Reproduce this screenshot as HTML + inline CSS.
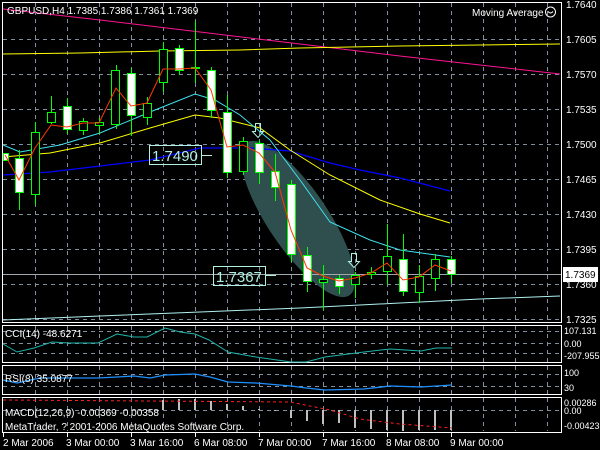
<!DOCTYPE html>
<html><head><meta charset="utf-8"><style>
html,body{margin:0;padding:0;background:#000;width:600px;height:450px;overflow:hidden}
svg{display:block}
text{font-family:"Liberation Sans",sans-serif;font-size:10px;fill:#fff}
</style></head><body>
<svg width="600" height="450" viewBox="0 0 600 450" xmlns="http://www.w3.org/2000/svg">
<rect width="600" height="450" fill="#000"/>
<g stroke="#7f8f9f" stroke-width="1" stroke-dasharray="4,4">
<path d="M3 39.5H561M3 74.5H561M3 109.5H561M3 144.5H561M3 179.5H561M3 214.5H561M3 249.5H561M3 284.5H561M3 319.5H561"/>
<path d="M35.5 3V322M67.5 3V322M99.5 3V322M131.5 3V322M163.5 3V322M195.5 3V322M227.5 3V322M259.5 3V322M291.5 3V322M323.5 3V322M355.5 3V322M387.5 3V322M419.5 3V322M451.5 3V322M483.5 3V322M515.5 3V322M547.5 3V322"/>
<path d="M3 331.5H561M3 343.5H561M3 353.5H561M3 374.5H561M3 386.5H561M3 410.5H561"/>
<path d="M35.5 326V362M67.5 326V362M99.5 326V362M131.5 326V362M163.5 326V362M195.5 326V362M227.5 326V362M259.5 326V362M291.5 326V362M323.5 326V362M355.5 326V362M387.5 326V362M419.5 326V362M451.5 326V362M483.5 326V362M515.5 326V362M547.5 326V362"/>
<path d="M35.5 366V394M67.5 366V394M99.5 366V394M131.5 366V394M163.5 366V394M195.5 366V394M227.5 366V394M259.5 366V394M291.5 366V394M323.5 366V394M355.5 366V394M387.5 366V394M419.5 366V394M451.5 366V394M483.5 366V394M515.5 366V394M547.5 366V394"/>
<path d="M35.5 398V431M67.5 398V431M99.5 398V431M131.5 398V431M163.5 398V431M195.5 398V431M227.5 398V431M259.5 398V431M291.5 398V431M323.5 398V431M355.5 398V431M387.5 398V431M419.5 398V431M451.5 398V431M483.5 398V431M515.5 398V431M547.5 398V431"/>
</g>
<g fill="none" stroke="#fff" stroke-width="1">
<rect x="2.5" y="2.5" width="559" height="320"/>
<rect x="2.5" y="325.5" width="559" height="37"/>
<rect x="2.5" y="365.5" width="559" height="29"/>
<rect x="2.5" y="397.5" width="559" height="35"/>
</g>
<ellipse cx="298" cy="219" rx="92" ry="30" transform="rotate(56 298 219)" fill="#2f4f4f"/>
<polyline fill="none" stroke="#ff1493" points="3,9 100,20 200,32 300,44 400,56 480,65 560,74"/>
<polyline fill="none" stroke="#ffff00" points="3,54 80,53 160,51 240,50 300,48 400,46 480,45 560,44"/>
<polyline fill="none" stroke="#b0f0f0" points="3,320 100,316 200,312 300,308 400,303 480,299 560,296"/>
<polyline fill="none" stroke="#0000ff" stroke-width="1.3" points="3,175 50,172 100,166 150,160 200,148 250,148 290,151 330,163 360,170 400,178 450,191"/>
<polyline fill="none" stroke="#ffff00" points="3,157 50,153 100,143 150,128 195,115 220,118 260,128 290,150 330,175 380,200 420,214 450,223"/>
<polyline fill="none" stroke="#40e0f0" points="3,145 20,152 60,145 100,133 150,112 195,94 215,100 240,115 270,140 300,180 330,222 370,240 400,250 450,257"/>
<line x1="3" y1="274.5" x2="561" y2="274.5" stroke="#a0a8b0"/>
<g stroke="#00ff00" stroke-width="1">
<path d="M19.5 150V210M35.5 122V205M51.5 96V124M67.5 98V134M83.5 118V135M99.5 118V134M116.5 65V129M131.5 68V136M147.5 97V125M163.5 42V92M179.5 45V75M195.5 21V83M211.5 67V118M227.5 95V178M243.5 137V175M259.5 140V184M275.5 154V201M291.5 180V262M307.5 247V292M323.5 265V310M339.5 275V294M355.5 272V298M371.5 267V279M387.5 224V285M403.5 234V296M419.5 265V303M435.5 254V291M451.5 256V283"/>
<g fill="#fff">
<rect x="3.5" y="153.5" width="5" height="7"/>
<rect x="15.5" y="158.5" width="8" height="34"/>
<rect x="63.5" y="106.5" width="8" height="23"/>
<rect x="127.5" y="73.5" width="8" height="42"/>
<rect x="175.5" y="48.5" width="8" height="22"/>
<rect x="207.5" y="70.5" width="8" height="40"/>
<rect x="223.5" y="112.5" width="8" height="60"/>
<rect x="255.5" y="143.5" width="8" height="29"/>
<rect x="271.5" y="171.5" width="8" height="16"/>
<rect x="287.5" y="184.5" width="8" height="70"/>
<rect x="303.5" y="255.5" width="8" height="26"/>
<rect x="335.5" y="278.5" width="8" height="8"/>
<rect x="399.5" y="259.5" width="8" height="32"/>
<rect x="447.5" y="259.5" width="8" height="15"/>
</g>
<g fill="#000">
<rect x="31.5" y="132.5" width="8" height="62"/>
<rect x="47.5" y="112.5" width="8" height="10"/>
<rect x="79.5" y="121.5" width="8" height="9"/>
<rect x="95.5" y="122.5" width="8" height="3"/>
<rect x="111.5" y="70.5" width="8" height="54"/>
<rect x="143.5" y="103.5" width="8" height="14"/>
<rect x="159.5" y="49.5" width="8" height="33"/>
<rect x="191.5" y="67.5" width="8" height="1"/>
<rect x="239.5" y="141.5" width="8" height="30"/>
<rect x="319.5" y="279.5" width="8" height="3"/>
<rect x="351.5" y="275.5" width="8" height="9"/>
<rect x="367.5" y="272.5" width="8" height="2"/>
<rect x="383.5" y="256.5" width="8" height="15"/>
<rect x="415.5" y="276.5" width="8" height="16"/>
<rect x="431.5" y="259.5" width="8" height="19"/>
</g>
</g>
<polyline fill="none" stroke="#ff3800" points="5,155 19,180 35,148 51,125 67,127 83,123 99,123 116,88 131,106 147,103 163,69 179,69 195,68 211,90 227,147 243,145 259,153 275,172 291,230 307,268 323,276 339,281 355,278 371,273 387,263 403,280 419,277 435,265 451,271"/>
<path d="M255.5 123.5h5v8h3l-5.5 6l-5.5-6h3z" fill="none" stroke="#b0f0e0"/>
<path d="M351.5 253.5h5v8h3l-5.5 6l-5.5-6h3z" fill="none" stroke="#b0f0e0"/>
<rect x="149.5" y="145.5" width="52" height="19" fill="none" stroke="#b0f0e0"/>
<line x1="201" y1="155.5" x2="212" y2="155.5" stroke="#b0f0e0"/>
<text x="152" y="161" style="font-size:15px;fill:#b0f0e0">1.7490</text>
<rect x="213.5" y="266.5" width="52" height="19" fill="none" stroke="#b0f0e0"/>
<line x1="265" y1="275.5" x2="276" y2="275.5" stroke="#b0f0e0"/>
<text x="216" y="282" style="font-size:15px;fill:#b0f0e0">1.7367</text>
<text x="7" y="14">GBPUSD,H4  1.7385 1.7386 1.7361 1.7369</text>
<text x="472" y="16">Moving Average</text>
<circle cx="550.5" cy="12" r="5" fill="none" stroke="#fff"/>
<path d="M548 11.5q2.5 3 5 0" fill="none" stroke="#fff"/>
<g>
<text x="566" y="8">1.7640</text>
<text x="566" y="43">1.7605</text>
<text x="566" y="78">1.7570</text>
<text x="566" y="113">1.7535</text>
<text x="566" y="148">1.7500</text>
<text x="566" y="183">1.7465</text>
<text x="566" y="218">1.7430</text>
<text x="566" y="253">1.7395</text>
<text x="566" y="288">1.7360</text>
<text x="566" y="323">1.7325</text>
</g>
<rect x="563" y="267" width="35" height="15" fill="#fff"/>
<text x="565" y="278" style="fill:#000">1.7369</text>
<polyline fill="none" stroke="#20b2aa" points="3,344 17,352 34,348 52,342 69,343 98,343 117,334 134,337 147,337 165,328 180,332 195,334 209,340 228,352 256,357 291,362 306,362 325,357 364,352 390,349 421,351 436,348 452,348"/>
<text x="5" y="337">CCI(14) -48.6271</text>
<text x="564" y="334" style="font-size:9px">107.131</text>
<text x="564" y="347" style="font-size:9px">0.00</text>
<text x="564" y="359" style="font-size:9px">-207.955</text>
<polyline fill="none" stroke="#1e90ff" stroke-width="1.3" points="3,380 17,383 40,378 98,378 117,377 134,376 150,378 165,375 195,374 210,377 228,382 256,383 291,386 306,388 325,390 364,389 390,386 421,387 452,385"/>
<text x="5" y="382">RSI(8) 35.0877</text>
<text x="564" y="376" style="font-size:9px">100</text>
<text x="564" y="391" style="font-size:9px">30</text>
<g stroke="#c0c0c0" stroke-width="2">
<path d="M163 410V400M179 410V399M195 410V399M211 410V401M227 410V404M243 410V406M259 410V409M275 410V411M291 410V418M307 410V421M323 410V424M339 410V423M355 410V428M371 410V429M387 410V430M403 410V431M419 410V430M435 410V430M451 410V430"/>
</g>
<polyline fill="none" stroke="#ff2020" stroke-dasharray="3,3" points="3,400 150,401 290,402 330,410 360,419 400,424 452,428"/>
<text x="5" y="416">MACD(12,26,9) -0.00369 -0.00358</text>
<text x="5" y="430">MetaTrader, ? 2001-2006 MetaQuotes Software Corp.</text>
<text x="564" y="406" style="font-size:9px">0.00286</text>
<text x="564" y="414" style="font-size:9px">0.00</text>
<text x="564" y="429" style="font-size:9px">-0.00423</text>
<g stroke="#fff"><path d="M3.5 433v4M67.5 433v4M131.5 433v4M195.5 433v4M259.5 433v4M323.5 433v4M387.5 433v4M451.5 433v4"/></g>
<text x="3" y="446">2 Mar 2006</text>
<text x="66" y="446">3 Mar 00:00</text>
<text x="130" y="446">3 Mar 16:00</text>
<text x="194" y="446">6 Mar 08:00</text>
<text x="258" y="446">7 Mar 00:00</text>
<text x="322" y="446">7 Mar 16:00</text>
<text x="386" y="446">8 Mar 08:00</text>
<text x="450" y="446">9 Mar 00:00</text>
</svg>
</body></html>
